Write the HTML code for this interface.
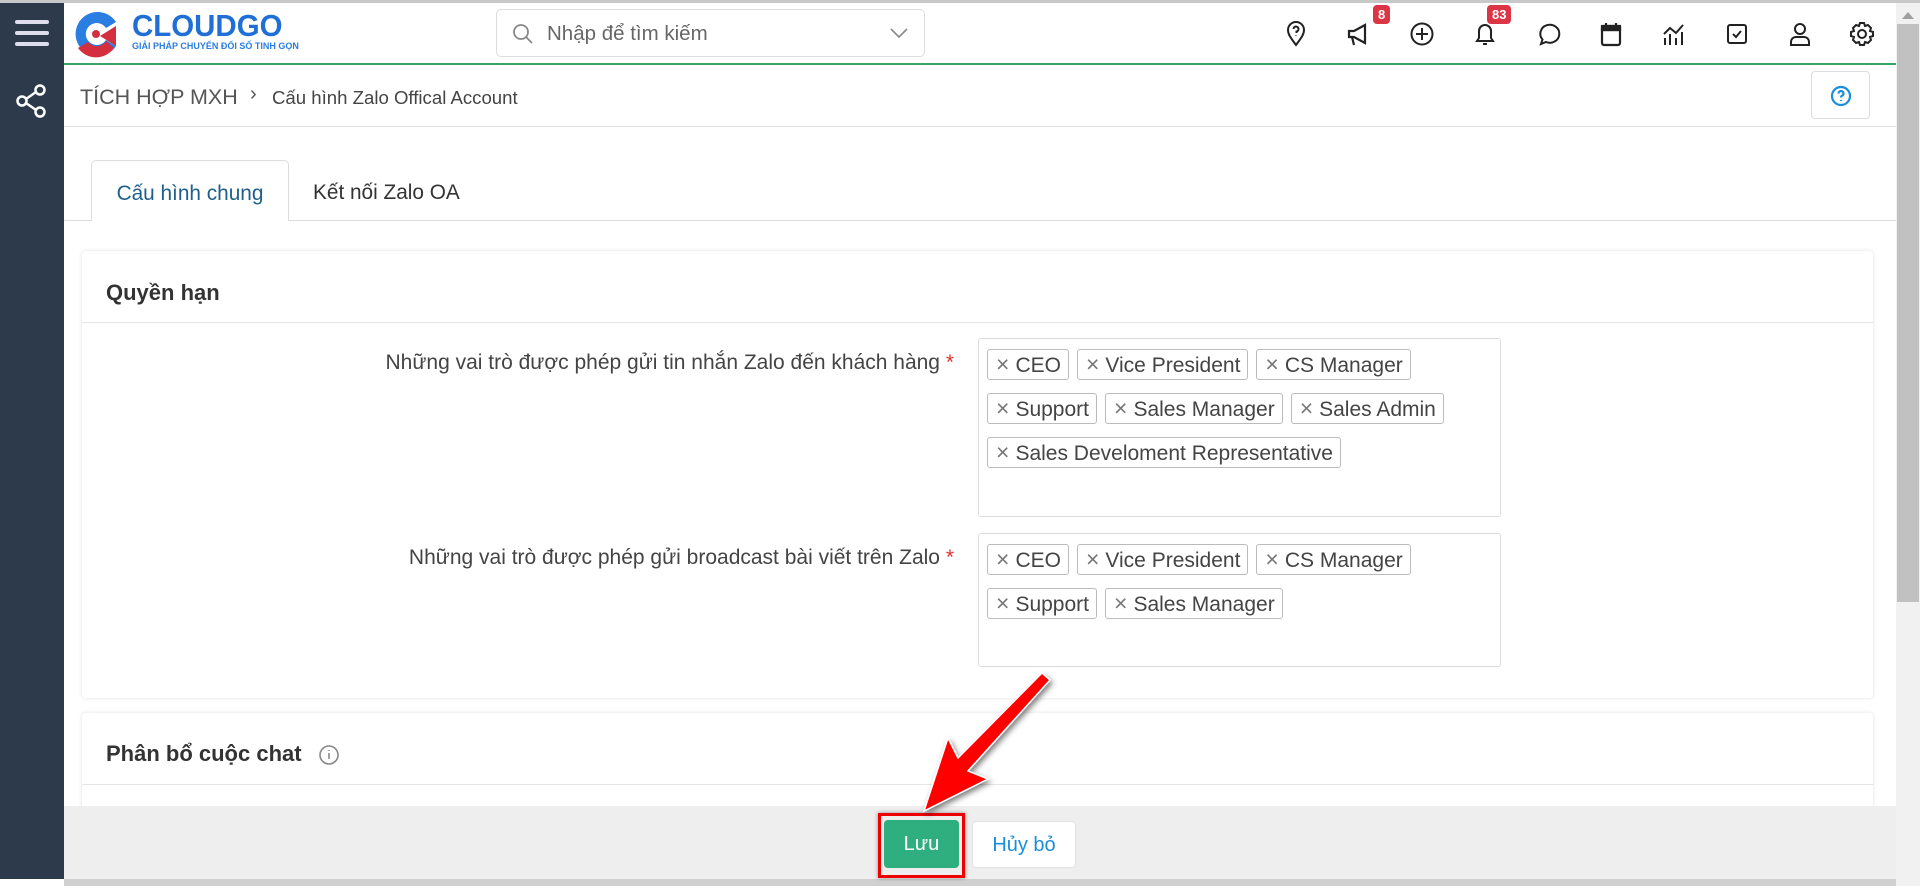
<!DOCTYPE html>
<html><head><meta charset="utf-8"><style>
*{box-sizing:border-box;margin:0;padding:0}
body{width:1920px;height:886px;overflow:hidden;background:#fff;font-family:"Liberation Sans","DejaVu Sans",sans-serif;position:relative;color:#333}
.abs{position:absolute}
#topb{left:0;top:0;width:1920px;height:3px;background:#c8c8c8}
#side{left:0;top:3px;width:64px;height:876px;background:#2c3a4b}
#hdr{left:64px;top:3px;width:1832px;height:62px;background:#fff;border-bottom:2px solid #3aa56b}
.search{left:496px;top:9px;width:429px;height:48px;border:1px solid #ddd;border-radius:5px;font-size:20.5px;color:#666}
.ic{position:absolute;top:20px;width:28px;height:28px}
.badge{position:absolute;background:#dc3545;color:#fff;font-size:13px;font-weight:bold;border-radius:4px;padding:2px 5px;top:5px}
#crumb{left:64px;top:67px;width:1832px;height:60px;border-bottom:1px solid #e2e2e2;background:#fff}
.tab{font-size:20.8px}
.card{background:#fff;border-radius:4px;box-shadow:0 0 4px rgba(0,0,0,.12)}
.lbl{font-size:21px;color:#444;text-align:right;width:890px;left:64px}
.box{border:1px solid #ddd;border-radius:3px;background:#fff;padding:10px 0 0 8px}
.tag{display:inline-block;border:1px solid #bbb;border-radius:3px;height:31px;line-height:29px;padding:0 7px 0 8px;font-size:21px;color:#444;margin:0 8px 13px 0;white-space:nowrap}
.tag b{font-weight:normal;color:#777;margin-right:6px;font-size:23px}
#foot{left:64px;top:806px;width:1832px;height:73px;background:#eee}
</style></head><body>
<div id="topb" class="abs"></div>
<div id="side" class="abs">
 <div class="abs" style="left:15px;top:17px;width:34px;height:4px;background:#dde;border-radius:2px"></div>
 <div class="abs" style="left:15px;top:28px;width:34px;height:4px;background:#dde;border-radius:2px"></div>
 <div class="abs" style="left:15px;top:39px;width:34px;height:4px;background:#dde;border-radius:2px"></div>
 <svg class="abs" style="left:14px;top:80px" width="36" height="36" viewBox="0 0 36 36" fill="none" stroke="#fff" stroke-width="2.5"><circle cx="26" cy="7" r="4.5"/><circle cx="8" cy="18" r="4.5"/><circle cx="26" cy="29" r="4.5"/><path d="M12 16L22 9M12 20L22 27"/></svg>
</div>
<div id="hdr" class="abs">
 <svg class="abs" style="left:6px;top:5px" width="52" height="52" viewBox="0 0 52 52"><path d="M26 4A22 22 0 1 0 46 38L36 32A11 11 0 1 1 36 20L46 14A22 22 0 0 0 26 4Z" fill="#2a7de1"/><path d="M46 38L30 28L46 18Z" fill="#d32f3f"/><path d="M8 40A22 22 0 0 0 44 40L36 33A11 11 0 0 1 18 34Z" fill="#d32f3f"/><circle cx="26" cy="26" r="4" fill="#d32f3f"/></svg>
 <div class="abs" style="left:68px;top:5px;font-size:31px;font-weight:bold;color:#1f6fd6;transform:scaleX(0.95);transform-origin:left">CLOUDGO</div>
 <div class="abs" style="left:68px;top:38px;font-size:9px;font-weight:bold;color:#2a7de1">GIẢI PHÁP CHUYỂN ĐỔI SỐ TINH GỌN</div>
</div>
<div class="abs search"><svg class="abs" style="left:14px;top:12px" width="24" height="24" viewBox="0 0 24 24" fill="none" stroke="#888" stroke-width="1.8"><circle cx="10" cy="10" r="7"/><path d="M15 15l6 6"/></svg><span class="abs" style="left:50px;top:12px">Nhập để tìm kiếm</span><svg class="abs" style="left:392px;top:16px" width="20" height="14" viewBox="0 0 20 14" fill="none" stroke="#888" stroke-width="1.6"><path d="M2 3l8 8 8-8"/></svg></div>
<svg class="ic" style="left:1282px" viewBox="0 0 28 28" fill="none" stroke="#222" stroke-width="2"><path d="M14 25C8 17 6 14 6 10a8 8 0 0 1 16 0c0 4-2 7-8 15z"/><path d="M11.5 9a2.5 2.5 0 1 1 3 2.5V13M14 15.5v.5"/></svg>
<svg class="ic" style="left:1345px" viewBox="0 0 28 28" fill="none" stroke="#222" stroke-width="2.2"><path d="M4 11h5l11-6v18l-11-6H4z"/><path d="M7 17l2 8"/></svg>
<div class="badge" style="left:1373px">8</div>
<svg class="ic" style="left:1408px" viewBox="0 0 28 28" fill="none" stroke="#222" stroke-width="2"><circle cx="14" cy="14" r="10.5"/><path d="M14 8v12M8 14h12"/></svg>
<svg class="ic" style="left:1471px" viewBox="0 0 28 28" fill="none" stroke="#222" stroke-width="2"><path d="M6 21h16l-2-3v-7a6 6 0 0 0-12 0v7z"/><path d="M12 24h4"/></svg>
<div class="badge" style="left:1487px">83</div>
<svg class="ic" style="left:1534px" viewBox="0 0 28 28" fill="none" stroke="#222" stroke-width="2"><path d="M7 24l1.5-4.5A9.5 9 0 1 1 12 22z"/></svg>
<svg class="ic" style="left:1597px" viewBox="0 0 28 28" fill="none" stroke="#222" stroke-width="2.2"><rect x="5" y="6" width="18" height="19" rx="2"/><path d="M5 10h18M9 3v4M19 3v4" /><rect x="5" y="6" width="18" height="4" fill="#222"/></svg>
<svg class="ic" style="left:1660px" viewBox="0 0 28 28" fill="none" stroke="#222" stroke-width="2"><path d="M4 14l6-6 6 5 7-8M5 18v7M10 14v11M16 18v7M22 12v13"/></svg>
<svg class="ic" style="left:1723px" viewBox="0 0 28 28" fill="none" stroke="#222" stroke-width="2"><rect x="5" y="5" width="18" height="18" rx="2"/><path d="M10 14l3 3 5-6"/></svg>
<svg class="ic" style="left:1786px" viewBox="0 0 28 28" fill="none" stroke="#222" stroke-width="2"><circle cx="14" cy="9" r="5"/><path d="M5 25v-3a5 5 0 0 1 5-5h8a5 5 0 0 1 5 5v3z"/></svg>
<svg class="ic" style="left:1848px" viewBox="0 0 28 28" fill="none" stroke="#222" stroke-width="2"><circle cx="14" cy="14" r="4"/><path d="M12 3h4l1 3 3-1 3 3-1 3 3 1v4l-3 1 1 3-3 3-3-1-1 3h-4l-1-3-3 1-3-3 1-3-3-1v-4l3-1-1-3 3-3 3 1z"/></svg>
<div id="crumb" class="abs">
 <span class="abs" style="left:16px;top:18px;font-size:21.5px;color:#555">TÍCH HỢP MXH</span>
 <span class="abs" style="left:186px;top:16px;font-size:20px;color:#555">›</span>
 <span class="abs" style="left:208px;top:20px;font-size:18.6px;color:#444">Cấu hình Zalo Offical Account</span>
 <div class="abs" style="left:1747px;top:4px;width:59px;height:48px;border:1px solid #ddd;border-radius:4px"><svg class="abs" style="left:18px;top:13px" width="22" height="22" viewBox="0 0 22 22" fill="none" stroke="#1a8ed8" stroke-width="2.2"><circle cx="11" cy="11" r="9"/><path d="M8.5 8.5a2.5 2.5 0 1 1 3.5 2.3c-.7.4-1 .9-1 1.7M11 15v1"/></svg></div>
</div>
<div class="abs" style="left:64px;top:220px;width:1832px;height:1px;background:#ddd"></div>
<div class="abs tab" style="left:91px;top:160px;width:198px;height:61px;border:1px solid #ddd;border-bottom:none;border-radius:5px 5px 0 0;background:#fff;color:#1f5f8b;padding-top:21px;text-align:center">Cấu hình chung</div>
<div class="abs tab" style="left:313px;top:181px;color:#333">Kết nối Zalo OA</div>
<div class="abs card" style="left:82px;top:251px;width:1791px;height:447px">
 <div class="abs" style="left:24px;top:29px;font-size:22px;font-weight:bold;color:#333">Quyền hạn</div>
 <div class="abs" style="left:0;top:71px;width:1791px;height:1px;background:#e6e6e6"></div>
</div>
<div class="abs lbl" style="top:351px">Những vai trò được phép gửi tin nhắn Zalo đến khách hàng <span style="color:#d33">*</span></div>
<div class="abs box" style="left:978px;top:338px;width:523px;height:179px">
 <span class="tag"><b>×</b>CEO</span><span class="tag"><b>×</b>Vice President</span><span class="tag"><b>×</b>CS Manager</span><span class="tag"><b>×</b>Support</span><span class="tag"><b>×</b>Sales Manager</span><span class="tag"><b>×</b>Sales Admin</span><span class="tag"><b>×</b>Sales Develoment Representative</span>
</div>
<div class="abs lbl" style="top:546px">Những vai trò được phép gửi broadcast bài viết trên Zalo <span style="color:#d33">*</span></div>
<div class="abs box" style="left:978px;top:533px;width:523px;height:134px">
 <span class="tag"><b>×</b>CEO</span><span class="tag"><b>×</b>Vice President</span><span class="tag"><b>×</b>CS Manager</span><span class="tag"><b>×</b>Support</span><span class="tag"><b>×</b>Sales Manager</span>
</div>
<div class="abs card" style="left:82px;top:713px;width:1791px;height:120px">
 <div class="abs" style="left:24px;top:28px;font-size:22px;font-weight:bold;color:#333">Phân bổ cuộc chat</div>
 <svg class="abs" style="left:236px;top:31px" width="22" height="22" viewBox="0 0 22 22" fill="none" stroke="#888" stroke-width="1.6"><circle cx="11" cy="11" r="9"/><path d="M11 9v6M11 6v1"/></svg>
 <div class="abs" style="left:0;top:71px;width:1791px;height:1px;background:#e6e6e6"></div>
</div>
<div id="foot" class="abs"></div>
<div class="abs" style="left:64px;top:879px;width:1832px;height:7px;background:#d0d0d0"></div>
<div class="abs" style="left:878px;top:813px;width:87px;height:65px;border:3px solid #e00;box-shadow:0 0 4px rgba(0,0,0,.4)"></div>
<div class="abs" style="left:884px;top:820px;width:75px;height:48px;background:#2fae7f;border-radius:4px;color:#fff;font-size:20px;text-align:center;line-height:48px">Lưu</div>
<div class="abs" style="left:972px;top:821px;width:104px;height:47px;background:#fff;border-radius:4px;color:#1a8ed8;font-size:20px;text-align:center;line-height:47px;border:1px solid #e2e2e2">Hủy bỏ</div>
<svg class="abs" style="left:900px;top:670px" width="160" height="150" viewBox="0 0 160 150"><defs><filter id="sh"><feDropShadow dx="2" dy="3" stdDeviation="3" flood-opacity=".5"/></filter></defs><polygon points="142,3 58,88 48,68 24,141 88,109 68,101 150,10" fill="#f00" stroke="#fff" stroke-width="1.5" filter="url(#sh)"/></svg>
<div class="abs" style="left:1896px;top:3px;width:24px;height:883px;background:#f1f1f1"></div>
<div class="abs" style="left:1897px;top:24px;width:22px;height:578px;background:#c1c1c1"></div>
<div class="abs" style="left:1902px;top:12px;width:0;height:0;border-left:6px solid transparent;border-right:6px solid transparent;border-bottom:7px solid #a0a0a0"></div>
</body></html>
